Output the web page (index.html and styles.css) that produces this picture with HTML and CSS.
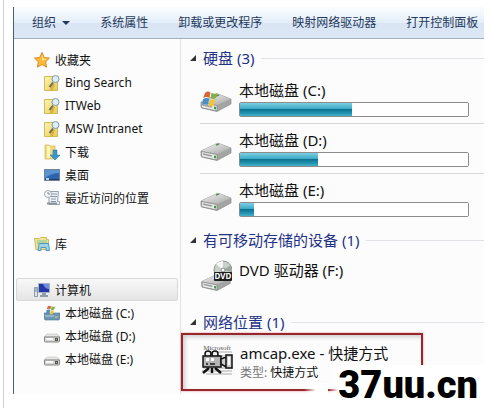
FILE: index.html
```html
<!DOCTYPE html>
<html lang="zh-CN">
<head>
    <meta charset="utf-8">
    <title>计算机</title>
    <link rel="stylesheet" href="styles.css">
</head>
<body>
    <!-- shared icons -->
    <svg class="symbols" aria-hidden="true">
        <defs>
            <linearGradient id="metal" x1="0" y1="0" x2="1" y2="1">
                <stop offset="0" stop-color="#f4f4f4"/>
                <stop offset="1" stop-color="#a3a5a3"/>
            </linearGradient>
            <linearGradient id="paper" x1="0" y1="0" x2="1" y2="1">
                <stop offset="0" stop-color="#fdf6b4"/>
                <stop offset="1" stop-color="#e6c95a"/>
            </linearGradient>
        </defs>
        <symbol id="search-folder" viewBox="0 0 16 16">
            <path d="M.5 1.500h13v14H.5z" fill="url(#paper)" stroke="#d2bb55"/>
            <path d="M7 9l4 0-2 6H6z" fill="#d9b33f"/>
            <path d="M9 7.500L5.500 12" stroke="#6b6c58" stroke-width="2"/>
            <circle cx="11.500" cy="4" r="3.500" fill="#dceef8" stroke="#8499a8"/>
        </symbol>
        <symbol id="small-drive" viewBox="0 0 16 16">
            <path d="M3 6h10l3 3H0z" fill="#e6e6e4" stroke="#b5b5b3" stroke-width=".5"/>
            <path d="M.5 9h15v4q0 1-1 1h-13q-1 0-1-1z" fill="#d4d4d2" stroke="#858583"/>
            <path d="M2 11h7" stroke="#f8f8f8" stroke-width="2"/>
            <path d="M11 10h3v3h-3z" fill="#555"/>
            <path d="M12 11h1v1h-1z" fill="#7bd36d"/>
        </symbol>
        <symbol id="flag" viewBox="0 0 16 16">
            <path d="M3 2q3-2 5 0L7 7Q4 5 1 7z" fill="#d9643a"/>
            <path d="M9 2q3 2 6 0l-2 5q-3 2-5 0z" fill="#83b04a"/>
            <path d="M1 8q3-2 6 0l-2 6q-2-2-5 0z" fill="#4c8ec8"/>
            <path d="M8 8q3 2 5 0l-2 6q-3 2-5 0z" fill="#f0c43c"/>
        </symbol>
        <symbol id="big-drive" viewBox="0 0 32 20">
            <path d="M1 9L17 1.500q1-.5 2 0L31 6v5l-14 7.500L2 15q-1 0-1-1z" fill="#a3a5a3" stroke="#8b8d8b" stroke-width=".7"/>
            <path d="M1 9L17 1.500q1-.5 2 0L31 6 17 12z" fill="url(#metal)"/>
            <path d="M1.500 9.500L17 12.500v5.500L3 15q-1.500 0-1.500-1.500z" fill="#e9ebe9" stroke="#858785" stroke-width=".8"/>
            <path d="M3 12l9 2" stroke="#999b99" stroke-width="1.500"/>
            <path d="M14 13.500l2 .5v2.500l-2-.5z" fill="#3c973e"/>
            <path d="M16 3l3-1" stroke="#5d8c5b" stroke-width="1.500"/>
        </symbol>
    </svg>

    <div class="page">
        <div class="window">
            <div class="toolbar">
                <button type="button" class="organize">组织 <span class="caret"></span></button>
                <button type="button">系统属性</button>
                <button type="button">卸载或更改程序</button>
                <button type="button">映射网络驱动器</button>
                <button type="button">打开控制面板</button>
            </div>

            <div class="content">
                <nav class="sidebar">
                    <div class="group">
                        <a href="#" class="root">
                            <svg class="icon" viewBox="0 0 16 16"><path d="M8 .5l2.300 5 5.200.6-3.900 3.700 1 5.400L8 12.500l-4.600 2.700 1-5.400L.5 6.100l5.200-.6z" fill="#fbb935" stroke="#d98a2c"/><path d="M8 3l1.500 3.500L13 7 8 9z" fill="#ffe082"/></svg>
                            收藏夹
                        </a>
                        <a href="#"><svg class="icon"><use href="#search-folder"/></svg>Bing Search</a>
                        <a href="#"><svg class="icon"><use href="#search-folder"/></svg>ITWeb</a>
                        <a href="#"><svg class="icon"><use href="#search-folder"/></svg>MSW Intranet</a>
                        <a href="#">
                            <svg class="icon" viewBox="0 0 16 16"><path d="M1 1h4l1 1h5v13H1z" fill="#f1d878" stroke="#d5b455" stroke-width=".7"/><path d="M3 2h3v12H3z" fill="#fff3bd"/><path d="M9 6h4v5h3l-5 5-5-5h3z" fill="#3a96ca" stroke="#2675a8" stroke-width=".5"/></svg>
                            下载
                        </a>
                        <a href="#">
                            <svg class="icon" viewBox="0 0 16 16"><path d="M.5 2.500h15v11H.5z" fill="#2e63ad" stroke="#6e8299"/><path d="M1 3h14v3Q8 6 1 11z" fill="#5a92d2"/><path d="M1 12h14v1H1z" fill="#263a5c"/><path d="M2 11h3v2H2z" fill="#b6d5ee"/></svg>
                            桌面
                        </a>
                        <a href="#">
                            <svg class="icon" viewBox="0 0 16 16"><path d="M5 1.500h9.500l-1 10h2v3H5z" fill="#eef1f4" stroke="#98a1aa"/><path d="M8 4h5M7 6.500h6M7 9h5M7 11.500h5" stroke="#8095ad"/><path d="M3 13.500h10" stroke="#8c959f" stroke-width="2"/><circle cx="4" cy="4" r="3.500" fill="#f8fafb" stroke="#a0a8ae"/><path d="M4 2v2h2" fill="none" stroke="#77818b"/></svg>
                            最近访问的位置
                        </a>
                    </div>

                    <div class="group">
                        <a href="#" class="root">
                            <svg class="icon" viewBox="0 0 16 16"><path d="M.5 2.500h5l1-1h6v2h2v10H2z" fill="#f2e295" stroke="#ccb863"/><path d="M3 4h10v4H3z" fill="#b2d59c"/><path d="M5 7.500h9.500l1 7H12v-3H7v3H4z" fill="#9ed3e8" stroke="#4f9bb7"/></svg>
                            库
                        </a>
                    </div>

                    <div class="group">
                        <a href="#" class="root active">
                            <svg class="icon" viewBox="0 0 16 16"><path d="M.5 5.500h3v9h-3z" fill="#dfe4e9" stroke="#8c98a5"/><path d="M1 7h2M1 9h2" stroke="#6193ba"/><path d="M4.500 1.500h11v9h-11z" fill="#2338a6" stroke="#a8b0c4"/><path d="M9 2h6v5Q11 7 9 2z" fill="#6e8ce5"/><path d="M8 11h4v2h2v2H6v-2h2z" fill="#939ca9"/></svg>
                            计算机
                        </a>
                        <a href="#">
                            <svg class="icon" viewBox="0 0 16 16"><path d="M0 8h16v5l-1 2H1l-1-2z" fill="#6c96b2" stroke="#4c748e" stroke-width=".6"/><path d="M1 11h9" stroke="#b8d1df"/><path d="M11 12h3" stroke="#c2df74"/><use href="#flag" x="2" y="0" width="10" height="10"/></svg>
                            本地磁盘 (C:)
                        </a>
                        <a href="#"><svg class="icon"><use href="#small-drive"/></svg>本地磁盘 (D:)</a>
                        <a href="#"><svg class="icon"><use href="#small-drive"/></svg>本地磁盘 (E:)</a>
                    </div>
                </nav>

                <main class="main">
                    <section>
                        <h2>硬盘 (3)</h2>
                        <div class="item drive">
                            <svg class="thumb" viewBox="0 0 32 32"><use href="#big-drive" y="9" width="32" height="20"/><use href="#flag" x="2" y="6" width="17" height="18"/></svg>
                            <div class="info">
                                <label for="drive-c">本地磁盘 (C:)</label>
                                <progress id="drive-c" value="49" max="100"></progress>
                            </div>
                        </div>
                        <div class="item drive">
                            <svg class="thumb" viewBox="0 0 32 32"><use href="#big-drive" y="8" width="32" height="20"/></svg>
                            <div class="info">
                                <label for="drive-d">本地磁盘 (D:)</label>
                                <progress id="drive-d" value="34" max="100"></progress>
                            </div>
                        </div>
                        <div class="item drive">
                            <svg class="thumb" viewBox="0 0 32 32"><use href="#big-drive" y="8" width="32" height="20"/></svg>
                            <div class="info">
                                <label for="drive-e">本地磁盘 (E:)</label>
                                <progress id="drive-e" value="6" max="100"></progress>
                            </div>
                        </div>
                    </section>

                    <section>
                        <h2>有可移动存储的设备 (1)</h2>
                        <div class="item dvd">
                            <svg class="thumb" viewBox="0 0 32 32">
                                <use href="#big-drive" y="13" width="32" height="19"/>
                                <circle cx="23" cy="10" r="9" fill="#c9d0ca" stroke="#8a918b"/>
                                <path d="M23 10L16 4a9 9 0 0 1 7-3z" fill="#f5f7f5"/>
                                <path d="M23 10l8-5v7z" fill="#9aa99e"/>
                                <circle cx="23" cy="10" r="2" fill="#fff" stroke="#888"/>
                                <rect x="14" y="12" width="18" height="9" rx="1" fill="#1c1c1c"/>
                                <text x="23" y="19" class="disc">DVD</text>
                            </svg>
                            <div class="info">DVD 驱动器 (F:)</div>
                        </div>
                    </section>

                    <section>
                        <h2>网络位置 (1)</h2>
                        <a href="#" class="item shortcut">
                            <svg class="thumb" viewBox="0 0 32 32">
                                <path d="M5 9h26M9 13h22M2 25h30M1 28h30M5 31h26" stroke="#aaa"/>
                                <text x="16" y="7" class="brand">Microsoft</text>
                                <circle cx="7" cy="11" r="3" fill="#eee" stroke="#111" stroke-width="1.500"/>
                                <circle cx="14" cy="11" r="3" fill="#eee" stroke="#111" stroke-width="1.500"/>
                                <path d="M2 13h18v11H2z" fill="#b5b5b5" stroke="#111" stroke-width="1.500"/>
                                <path d="M5 15h3v3H5zM10 15h3v3h-3z" fill="#fff"/>
                                <path d="M5 20h2v2H5zM9 20h5v2H9z" fill="#444"/>
                                <path d="M20 16l5-2v10l-5-3zM25 12h6v13h-6z" fill="#ccc" stroke="#111" stroke-width="1.500"/>
                                <path d="M27 14h2v8h-2z" fill="#fff"/>
                                <path d="M8 25l-6 5M11 25v5M14 25l6 5" stroke="#111" stroke-width="2.500"/>
                            </svg>
                            <div class="info">
                                amcap.exe - 快捷方式
                                <small><span>类型:</span> 快捷方式</small>
                            </div>
                        </a>
                    </section>
                </main>
            </div>
        </div>
        <div class="watermark">37uu.cn</div>
    </div>
</body>
</html>
```

FILE: styles.css
```css
* {
    box-sizing: border-box;
}

body {
    margin: 0;
    background-color: #fff;
    color: #111;
    font-family: "Noto Sans", "Noto Sans CJK SC", sans-serif;
    font-size: 12px;
}

a {
    color: inherit;
    text-decoration: none;
}

.symbols {
    position: absolute;
    width: 0;
    height: 0;
}

.page {
    position: relative;
    min-height: 100vh;
    margin-left: 3px;
    padding: 7px 8px 14px 9px;
    border-left: 1px solid #d0d0d0;
}

.window {
    border-left: 1px solid #42646a;
    background-color: #fcfcfc;
}

.toolbar {
    display: flex;
    align-items: center;
    gap: 30px;
    height: 32px;
    padding: 0 5px 0 18px;
    border-bottom: 1px solid #a3afc0;
    background: linear-gradient(#fafdff, #e4eef9 50%, #d9e5f4 52%, #dce7f5);
}

.toolbar button {
    padding: 0;
    border: none;
    background: none;
    color: #1e395b;
    font: inherit;
    line-height: 20px;
    white-space: nowrap;
}

.caret {
    display: inline-block;
    margin-left: 3px;
    border: 4px solid transparent;
    border-top-color: #1e395b;
    border-bottom: none;
    vertical-align: middle;
}

.content {
    display: flex;
}

.sidebar {
    display: flex;
    flex-direction: column;
    gap: 23px;
    flex: 0 0 167px;
    padding: 9px 2px 24px;
    border-right: 1px solid #dfe3e9;
}

.sidebar a {
    display: flex;
    align-items: center;
    gap: 5px;
    height: 23px;
    padding-left: 28px;
}

.sidebar .root {
    padding-left: 18px;
}

.sidebar .active {
    border: 1px solid #d9d9d9;
    border-radius: 2px;
    padding-left: 17px;
    background: linear-gradient(#f8f8f8, #e5e5e5);
}

.icon {
    flex: none;
    width: 16px;
    height: 16px;
}

.main {
    flex: 1;
    min-width: 0;
    padding-top: 9px;
    font-size: 15px;
    line-height: 20px;
}

h2 {
    display: flex;
    align-items: center;
    gap: 7px;
    margin: 0;
    padding: 0 0 0 9px;
    color: #1e3287;
    font-size: 15px;
    font-weight: normal;
    white-space: nowrap;
}

h2::before {
    content: "";
    border-left: 6px solid transparent;
    border-bottom: 6px solid #333;
}

h2::after {
    content: "";
    flex: 1;
    height: 1px;
    background-color: #e0e3e8;
}

.item {
    display: flex;
    gap: 7px;
    margin-left: 19px;
}

.thumb {
    flex: none;
    width: 32px;
    height: 32px;
}

.info {
    flex: 1;
}

.drive {
    height: 50px;
    padding: 6px 15px 0 0;
    border-bottom: 1px solid #d8d8d8;
}

h2 + .drive {
    margin-top: 6px;
}

.drive:last-child {
    border-bottom-color: transparent;
}

.drive label {
    display: block;
}

.drive .thumb {
    margin-top: 4px;
}

progress {
    display: block;
    width: 100%;
    height: 15px;
    margin-top: 2px;
    border: 1px solid #8c8c8c;
    border-radius: 2px;
    background-color: #fff;
    appearance: none;
}

progress::-webkit-progress-bar {
    background-color: #fff;
}

progress::-webkit-progress-value {
    background: linear-gradient(#7cd0e2, #3ba9c4 45%, #0d7292 50%, #2595b2 80%, #47b2c9);
}

section + section {
    margin-top: 6px;
}

.dvd {
    height: 56px;
    padding-top: 10px;
}

.disc {
    fill: #fff;
    font-size: 8px;
    font-weight: bold;
    text-anchor: middle;
}

.brand {
    fill: #555;
    font-family: "Liberation Serif", serif;
    font-size: 7px;
    text-anchor: middle;
}

.shortcut {
    width: 80%;
    height: 58px;
    margin: 1px 0 0;
    padding: 8px 0 0 18px;
    border: 2px solid #98262b;
    box-shadow: 0 0 2px #d88b8e, inset 2px 2px 4px #ccc;
}

.shortcut .thumb {
    overflow: visible;
}

.shortcut small {
    display: block;
    font-size: 12px;
}

.shortcut span {
    color: #777;
}

/* sits over the lower right corner of the window */
.watermark {
    position: absolute;
    right: 8px;
    bottom: 3px;
    padding: 0 6px 0 10px;
    background: linear-gradient(90deg, transparent, #fff 10px);
    color: #000;
    font-family: Roboto, "Liberation Sans", sans-serif;
    font-size: 38px;
    font-weight: 900;
    line-height: 40px;
}

/* fades the frame out before the text starts */
.watermark::before {
    content: "";
    position: absolute;
    right: 100%;
    bottom: 8px;
    width: 24px;
    height: 14px;
    background: linear-gradient(90deg, transparent, #fff 12px);
}
```
